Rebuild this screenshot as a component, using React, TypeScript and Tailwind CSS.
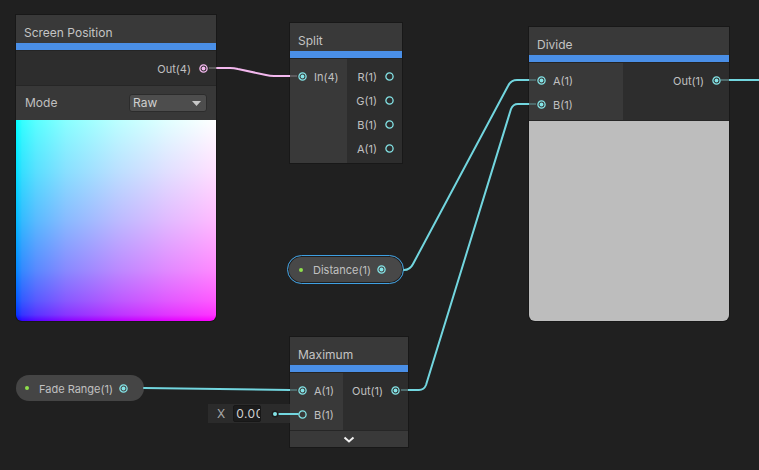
import React from 'react';

const CYAN = '#84e4e7';
const PINK = '#f3b8ee';

function Port({ color, connected }: { color: string; connected?: boolean }) {
  return (
    <svg width="9" height="9" viewBox="0 0 9 9" className="shrink-0">
      <circle cx="4.5" cy="4.5" r="3.6" fill="none" stroke={color} strokeWidth="1.3" />
      {connected && <circle cx="4.5" cy="4.5" r="1.9" fill={color} />}
    </svg>
  );
}

function Title({ text }: { text: string }) {
  return (
    <>
      <div className="h-[28px] bg-[#393939] pl-[8px] pt-[10px] text-[12px] leading-[16px] text-[#c4c4c4] whitespace-nowrap">{text}</div>
      <div className="h-[8px] bg-[#4a8fe7] border-b border-[#242424]" />
    </>
  );
}

function InRow({ label, connected }: { label: string; connected?: boolean }) {
  return (
    <div className="h-[24px] flex items-center gap-[7px] pl-[8px] whitespace-nowrap">
      <Port color={CYAN} connected={connected} />
      <span className="pt-[3px]">{label}</span>
    </div>
  );
}

function OutRow({ label, connected, color = CYAN }: { label: string; connected?: boolean; color?: string }) {
  return (
    <div className="h-[24px] flex items-center justify-end gap-[8px] pr-[8px] whitespace-nowrap">
      <span className="pt-[3px]">{label}</span>
      <Port color={color} connected={connected} />
    </div>
  );
}

export default function App() {
  return (
    <div className="relative w-[759px] h-[470px] overflow-hidden bg-[#202020] font-['Inter','Liberation_Sans',sans-serif] text-[11px] text-[#c0c0c0]">
      {/* Screen Position */}
      <div className="absolute left-[16px] top-[15px] w-[200px] shadow-[0_0_0_1px_#181818] rounded-b-[6px]">
        <Title text="Screen Position" />
        <div className="h-[34px] bg-[#2d2d2d] flex items-center justify-end gap-[8px] pr-[8px]">
          <span className="pt-[3px]">Out(4)</span>
          <Port color={PINK} connected />
        </div>
        <div className="h-[35px] bg-[#383838] border-t border-[#262626] flex items-center justify-between pl-[9px] pr-[9px]">
          <span className="text-[12px]">Mode</span>
          <div className="w-[78px] h-[18px] bg-[#4d4d4d] border border-[#2c2c2c] rounded-[3px] flex items-center justify-between pl-[3px] pr-[5px] text-[12px] text-[#d0d0d0]">
            <span>Raw</span>
            <svg width="9" height="5" viewBox="0 0 9 5">
              <path d="M0 0 H9 L4.5 5 Z" fill="#c8c8c8" />
            </svg>
          </div>
        </div>
        <div className="h-[201px] rounded-b-[6px] bg-blend-screen bg-[linear-gradient(to_right,#0000ff_0%,rgb(52,0,255)_3%,rgb(89,0,255)_10%,rgb(136,0,255)_25%,rgb(186,0,255)_50%,rgb(224,0,255)_75%,#ff00ff_100%),linear-gradient(to_top,#000000_0%,rgb(0,52,0)_3%,rgb(0,89,0)_10%,rgb(0,136,0)_25%,rgb(0,186,0)_50%,rgb(0,224,0)_75%,#00ff00_100%)]" />
      </div>

      {/* Split */}
      <div className="absolute left-[290px] top-[23px] w-[112px] shadow-[0_0_0_1px_#181818]">
        <Title text="Split" />
        <div className="flex">
          <div className="w-[57px] bg-[#393939] pt-[5px] pb-[3px]">
            <InRow label="In(4)" connected />
          </div>
          <div className="flex-1 bg-[#2d2d2d] pt-[5px] pb-[3px]">
            <OutRow label="R(1)" />
            <OutRow label="G(1)" />
            <OutRow label="B(1)" />
            <OutRow label="A(1)" />
          </div>
        </div>
      </div>

      {/* Divide */}
      <div className="absolute left-[529px] top-[27px] w-[200px] shadow-[0_0_0_1px_#181818] rounded-b-[6px]">
        <Title text="Divide" />
        <div className="flex">
          <div className="w-[94px] bg-[#393939] pt-[5px] pb-[4px]">
            <InRow label="A(1)" connected />
            <InRow label="B(1)" connected />
          </div>
          <div className="flex-1 bg-[#2d2d2d] pt-[5px] pb-[4px]">
            <OutRow label="Out(1)" connected />
          </div>
        </div>
        <div className="h-[201px] bg-[#bdbdbd] rounded-b-[6px] border-t border-[#262626]" />
      </div>

      {/* Maximum */}
      <div className="absolute left-[290px] top-[337px] w-[118px] shadow-[0_0_0_1px_#181818]">
        <Title text="Maximum" />
        <div className="flex">
          <div className="w-[53px] bg-[#393939] pt-[5px] pb-[4px]">
            <InRow label="A(1)" connected />
            <InRow label="B(1)" />
          </div>
          <div className="flex-1 bg-[#2d2d2d] pt-[5px] pb-[4px]">
            <OutRow label="Out(1)" connected />
          </div>
        </div>
        <div className="h-[17px] bg-[#393939] border-t border-[#262626] flex items-center justify-center">
          <svg width="12" height="7" viewBox="0 0 12 7">
            <path d="M1.5 1.5 L6 5.5 L10.5 1.5" fill="none" stroke="#f0f0f0" strokeWidth="2" />
          </svg>
        </div>
      </div>

      {/* Distance property (selected) */}
      <div className="absolute left-[287px] top-[255px] w-[117px] h-[29px] rounded-full border border-[#3fa0e2] bg-[#484848] shadow-[inset_0_0_0_1px_#1e1e1e] flex items-center pl-[11px] pr-[17px] whitespace-nowrap">
        <div className="w-[4px] h-[4px] rounded-full bg-[#8fe04c]" />
        <span className="ml-[10px] pt-[2px]">Distance(1)</span>
        <span className="ml-auto flex"><Port color={CYAN} connected /></span>
      </div>

      {/* Fade Range property */}
      <div className="absolute left-[16px] top-[375px] w-[128px] h-[26px] rounded-full bg-[#454545] flex items-center pl-[9px] pr-[16px] whitespace-nowrap">
        <div className="w-[4px] h-[4px] rounded-full bg-[#8fe04c]" />
        <span className="ml-[10px] pt-[2px]">Fade Range(1)</span>
        <span className="ml-auto flex"><Port color={CYAN} connected /></span>
      </div>

      {/* Default value field for Maximum.B */}
      <div className="absolute left-[208px] top-[404px] w-[82px] h-[19px] bg-[#2b2b2b] flex items-center pl-[9px] text-[12px]">
        <span className="text-[#a8a8a8]">X</span>
        <div className="ml-[8px] w-[28px] h-[17px] bg-[#1c1c1c] border border-[#171717] rounded-[2px] overflow-hidden whitespace-nowrap pl-[2px] leading-[15px] tracking-[0.5px] text-[#d0d0d0]">
          0.00
        </div>
      </div>

      {/* Edges */}
      <svg className="absolute inset-0 pointer-events-none" width="759" height="470" viewBox="0 0 759 470">
        <g fill="none" strokeWidth="2" strokeLinecap="round" strokeLinejoin="round">
          <path d="M217 68 H230 Q234 68 238 69 L266 75 Q270 76 274 76 H290" stroke={PINK} />
          <path d="M404 270 Q410 270 413 264 L508 86 Q511 80 517 80 H529" stroke="#72d6df" />
          <path d="M408 390 H419 Q424 390 426 385 L511 109 Q513 104 518 104 H529" stroke="#72d6df" />
          <path d="M144 388 L290 390" stroke="#72d6df" />
          <path d="M729 80 H759" stroke="#72d6df" />
          <path d="M279 414 H298" stroke="#72d6df" />
        </g>
        <g strokeWidth="2">
          <path d="M209 68 H216" stroke="#5a5a5a" />
          <path d="M290 76 H297" stroke="#5e5a5e" />
          <path d="M529 80 H536" stroke="#4e6a6b" />
          <path d="M529 104 H536" stroke="#4e6a6b" />
          <path d="M721 80 H729" stroke="#4e6a6b" />
          <path d="M290 390 H297" stroke="#4e6a6b" />
          <path d="M401 390 H408" stroke="#4e6a6b" />
        </g>
        <circle cx="275" cy="414" r="3.5" fill="#1c1c1c" />
        <circle cx="275" cy="414" r="2" fill={CYAN} />
      </svg>
    </div>
  );
}
